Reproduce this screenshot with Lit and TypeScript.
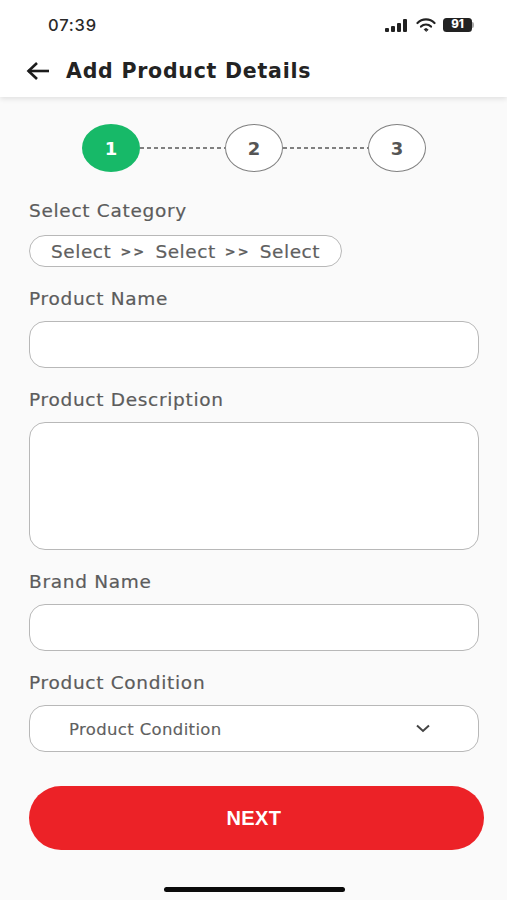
import { LitElement, html, css } from "lit";
import { customElement } from "lit/decorators.js";

@customElement("app-root")
export class AppRoot extends LitElement {
  static styles = css`
    :host { display: block; width: 507px; height: 900px; background: #fafafa; font-family: "DejaVu Sans", sans-serif; color: #5c5c5c; overflow: hidden; }
    .top { height: 97px; background: #fff; box-shadow: 0 2px 5px rgba(0,0,0,.1); display: flex; flex-direction: column; box-sizing: border-box; position: relative; }
    .status { display: flex; align-items: center; justify-content: space-between; height: 24px; margin-top: 13px; padding: 0 33px 0 48px; }
    .time { font-family: "Inter", sans-serif; font-size: 16.5px; font-weight: 500; color: #2a2a2a; letter-spacing: .8px; }
    .status-icons { display: flex; align-items: center; gap: 7px; }
    .battery { display: flex; align-items: center; }
    .batt { width: 29px; height: 14px; border-radius: 3.5px; background: #222; color: #fff; font-family: "Inter", sans-serif; font-size: 11.5px; font-weight: 800; display: flex; align-items: center; justify-content: center; line-height: 1; }
    .nub { width: 2px; height: 6px; background: #aaa; border-radius: 0 2px 2px 0; }
    .head { display: flex; align-items: center; gap: 16px; padding: 1px 0 0 26px; margin-top: 11px; height: 44px; box-sizing: border-box; }
    .title { font-size: 20.5px; font-weight: 700; color: #232323; letter-spacing: .76px; white-space: nowrap; }
    .steps { display: flex; align-items: center; padding: 27px 0 0 82px; }
    .step { width: 58px; height: 48px; box-sizing: border-box; border-radius: 50%; border: 1.5px solid #808080; background: #fff; display: flex; align-items: center; justify-content: center; font-size: 18px; font-weight: 700; color: #555; flex: none; }
    .step.on { background: #17b968; border: 0; color: #fff; }
    .dash { width: 85px; height: 2px; flex: none; background: repeating-linear-gradient(90deg, #808080 0 4px, transparent 4px 7px); }
    .form { display: flex; flex-direction: column; padding: 0 23px 0 29px; }
    label { font-size: 18.5px; font-weight: 400; color: #5c5c5c; line-height: 26px; height: 24px; letter-spacing: .7px; white-space: nowrap; -webkit-text-stroke: .2px #5c5c5c; }
    .l1 { margin-top: 26px; }
    .pill { margin-top: 13px; width: 313px; height: 32px; box-sizing: border-box; border: 1.2px solid #b8b8b8; border-radius: 16px; background: #fff; display: flex; align-items: center; padding-left: 21px; font-size: 18.5px; letter-spacing: .55px; color: #5f5f5f; white-space: nowrap; -webkit-text-stroke: .2px #5f5f5f; }
    .sep { font-size: 13px; width: 44px; text-align: center; letter-spacing: 2px; flex: none; font-weight: 700; }
    .l2 { margin-top: 19px; }
    .box { width: 450px; box-sizing: border-box; border: 1.2px solid #b8b8b8; border-radius: 16px; background: #fff; }
    .input { height: 47px; margin-top: 11px; }
    .area { height: 128px; margin-top: 11px; }
    .l3 { margin-top: 19px; }
    .sel { height: 47px; margin-top: 11px; display: flex; align-items: center; justify-content: space-between; padding: 0 48px 0 39px; font-size: 16.5px; letter-spacing: .35px; color: #5f5f5f; -webkit-text-stroke: .15px #5f5f5f; }
    .sel span { padding-top: 2px; }
    .btn { margin-top: 34px; width: 455px; height: 64px; border-radius: 32px; background: #ec2227; color: #fff; display: flex; align-items: center; justify-content: center; font-family: "Liberation Sans", sans-serif; font-size: 20px; font-weight: 700; letter-spacing: .4px; box-sizing: border-box; padding: 0 5px 0 0; }
    .home { width: 181px; height: 5px; border-radius: 3px; background: #0a0a0a; margin: 37px 0 0 164px; }
  `;
  render() {
    return html`
      <div class="top">
        <div class="status">
          <span class="time">07:39</span>
          <div class="status-icons">
            <svg width="24" height="13" viewBox="0 0 24 13" fill="#222"><rect x="0" y="9" width="4" height="4" rx="1"/><rect x="6" y="7" width="4" height="6" rx="1"/><rect x="12" y="4" width="4" height="9" rx="1"/><rect x="18" y="0" width="4" height="13" rx="1"/></svg>
            <svg width="20" height="15" viewBox="0 0 20 15" fill="none" stroke="#222" stroke-width="2.2" stroke-linecap="round"><path d="M1.5 5a12 12 0 0 1 17 0"/><path d="M5 8.6a7 7 0 0 1 10 0"/><path d="M10 13.2l-1.8-1.8a2.6 2.6 0 0 1 3.6 0z" fill="#222" stroke-width="1"/></svg>
            <div class="battery"><div class="batt">91</div><div class="nub"></div></div>
          </div>
        </div>
        <div class="head">
          <svg width="24" height="20" viewBox="0 0 24 20" fill="none" stroke="#1c1c1c" stroke-width="2.6"><path d="M23 10H2"/><path d="M11 2l-8.5 8 8.5 8"/></svg>
          <span class="title">Add Product Details</span>
        </div>
      </div>
      <div class="steps">
        <div class="step on">1</div><div class="dash"></div>
        <div class="step">2</div><div class="dash"></div>
        <div class="step">3</div>
      </div>
      <div class="form">
        <label class="l1">Select Category</label>
        <div class="pill"><span>Select</span><span class="sep">&gt;&gt;</span><span>Select</span><span class="sep">&gt;&gt;</span><span>Select</span></div>
        <label class="l2">Product Name</label>
        <div class="box input"></div>
        <label class="l3">Product Description</label>
        <div class="box area"></div>
        <label class="l3">Brand Name</label>
        <div class="box input"></div>
        <label class="l3">Product Condition</label>
        <div class="box sel"><span>Product Condition</span>
          <svg width="14" height="9" viewBox="0 0 14 9" fill="none" stroke="#444" stroke-width="2"><path d="M1 1.5l6 5.5 6-5.5"/></svg>
        </div>
        <div class="btn">NEXT</div>
      </div>
      <div class="home"></div>
    `;
  }
}
